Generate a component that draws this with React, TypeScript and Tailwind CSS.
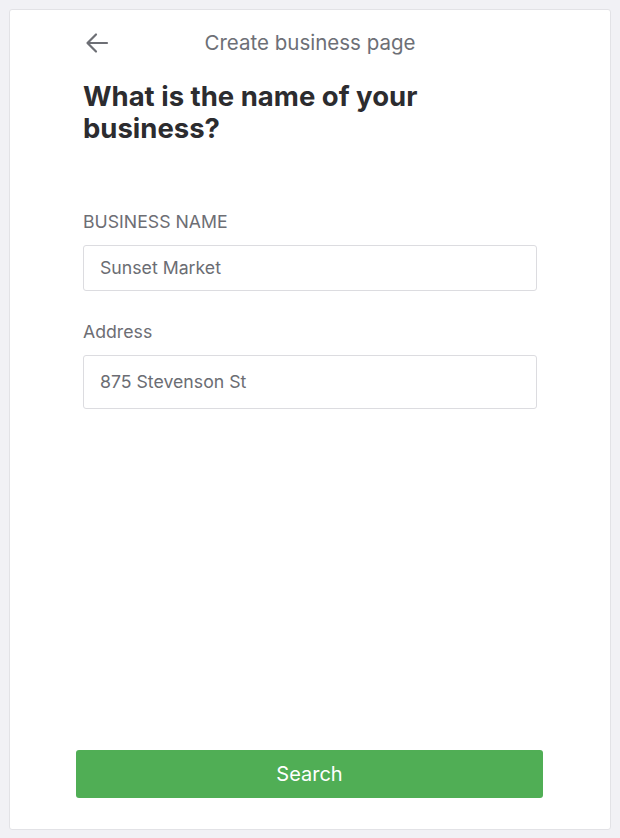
import React from "react";

export default function App() {
  return (
    <div className="w-[620px] h-[838px] bg-[#f1f1f5] p-[9px] font-['Inter','Liberation_Sans',sans-serif]">
      <div className="h-[821px] bg-white border border-[#e2e2e6] rounded-[3px] flex flex-col">
        <div className="px-[73px] pt-[19px]">
          <div className="relative h-[28px] flex items-center justify-center">
            <svg
              className="absolute left-[2px] top-[3px]"
              width="24"
              height="22"
              viewBox="0 0 24 22"
              fill="none"
              stroke="#6d6f75"
              strokeWidth="2.2"
              strokeLinecap="round"
              strokeLinejoin="round"
            >
              <path d="M22 11H3" />
              <path d="M11 2.5L2.5 11L11 19.5" />
            </svg>
            <span className="text-[20.5px] text-[#6d6f76] leading-[28px]">Create business page</span>
          </div>
          <h1 className="mt-[23px] text-[27.5px] leading-[32px] font-bold text-[#2c2c2f] w-[440px]">
            What is the name of your business?
          </h1>
          <div className="mt-[68px] text-[17.7px] leading-[20px] text-[#6d6e74]">BUSINESS NAME</div>
          <div className="mt-[13px] h-[46px] border border-[#dcdce0] rounded-[3px] flex items-center px-[16px] text-[17.7px] text-[#6b6d73]">
            Sunset Market
          </div>
          <div className="mt-[31px] text-[17.7px] leading-[20px] text-[#6d6e74]">Address</div>
          <div className="mt-[13px] h-[54px] border border-[#dcdce0] rounded-[3px] flex items-center px-[16px] text-[17.7px] text-[#6b6d73]">
            875 Stevenson St
          </div>
        </div>
        <div className="flex-1" />
        <div className="pl-[66px] pr-[67px] pb-[31px]">
          <button className="w-full h-[48px] bg-[#50ae55] rounded-[3px] text-white text-[20px] flex items-center justify-center">
            Search
          </button>
        </div>
      </div>
    </div>
  );
}
